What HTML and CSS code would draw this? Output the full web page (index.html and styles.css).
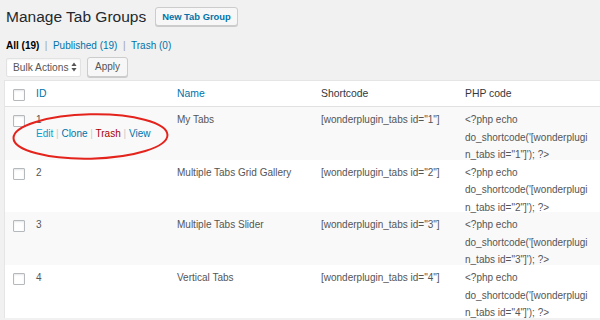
FILE: index.html
```html
<!DOCTYPE html>
<html lang="en">
<head>
    <meta charset="UTF-8">
    <meta name="viewport" content="width=device-width, initial-scale=1.0">
    <title>Manage Tab Groups</title>
    <link rel="stylesheet" href="styles.css">
</head>
<body>
    <div id="wrap">
        <div class="page-head">
            <h1>Manage Tab Groups</h1>
            <a class="btn btn-new" href="#">New Tab Group</a>
        </div>

        <div class="filters">
            <a class="current" href="#">All (19)</a>
            <span class="sep">|</span>
            <a href="#">Published (19)</a>
            <span class="sep">|</span>
            <a href="#">Trash (0)</a>
        </div>

        <div class="bulk">
            <div class="select">
                <span>Bulk Actions</span>
                <svg width="6" height="10" viewBox="0 0 6 10"><path d="M3 0.5L5.6 4H0.4z M3 9.5L0.4 6H5.6z" fill="#555"/></svg>
            </div>
            <button class="btn">Apply</button>
        </div>

        <div class="list">
            <div class="row head">
                <div class="cell cb"><span class="check"></span></div>
                <div class="cell"><a href="#">ID</a></div>
                <div class="cell"><a href="#">Name</a></div>
                <div class="cell">Shortcode</div>
                <div class="cell">PHP code</div>
            </div>

            <div class="row">
                <div class="cell cb"><span class="check"></span></div>
                <div class="cell">
                    1
                    <div class="actions">
                        <a class="edit" href="#">Edit</a> <span class="sep">|</span>
                        <a href="#">Clone</a> <span class="sep">|</span>
                        <a class="trash" href="#">Trash</a> <span class="sep">|</span>
                        <a href="#">View</a>
                    </div>
                </div>
                <div class="cell">My Tabs</div>
                <div class="cell">[wonderplugin_tabs id="1"]</div>
                <div class="cell"><div class="code">&lt;?php echo do_shortcode('[wonderplugin_tabs id="1"]'); ?&gt;</div></div>
            </div>

            <div class="row">
                <div class="cell cb"><span class="check"></span></div>
                <div class="cell">2</div>
                <div class="cell">Multiple Tabs Grid Gallery</div>
                <div class="cell">[wonderplugin_tabs id="2"]</div>
                <div class="cell"><div class="code">&lt;?php echo do_shortcode('[wonderplugin_tabs id="2"]'); ?&gt;</div></div>
            </div>

            <div class="row">
                <div class="cell cb"><span class="check"></span></div>
                <div class="cell">3</div>
                <div class="cell">Multiple Tabs Slider</div>
                <div class="cell">[wonderplugin_tabs id="3"]</div>
                <div class="cell"><div class="code">&lt;?php echo do_shortcode('[wonderplugin_tabs id="3"]'); ?&gt;</div></div>
            </div>

            <div class="row">
                <div class="cell cb"><span class="check"></span></div>
                <div class="cell">4</div>
                <div class="cell">Vertical Tabs</div>
                <div class="cell">[wonderplugin_tabs id="4"]</div>
                <div class="cell"><div class="code">&lt;?php echo do_shortcode('[wonderplugin_tabs id="4"]'); ?&gt;</div></div>
            </div>

            <!-- red marker round the row actions -->
            <svg class="marker" width="166" height="50" viewBox="0 0 166 50">
                <ellipse cx="78.5" cy="24.5" rx="77" ry="22.2" transform="rotate(-1.2 78.5 24.5)" fill="none" stroke="#e3231c" stroke-width="2"/>
            </svg>
        </div>
    </div>
</body>
</html>
```

FILE: styles.css
```css
html, body {
    margin: 0;
}
body {
    background: #f1f1f1;
    font-family: "Liberation Sans", Arial, sans-serif;
    font-size: 10px;
    color: #555;
    overflow: hidden;
}
a {
    color: #0073aa;
    text-decoration: none;
}

.page-head {
    display: flex;
    align-items: flex-start;
    gap: 9px;
    padding: 6px 6px 0;
}
h1 {
    margin: 0;
    font-size: 15.5px;
    font-weight: normal;
    line-height: 22px;
    color: #23282d;
}
.btn {
    display: inline-block;
    box-sizing: border-box;
    height: 20px;
    padding: 0 7px;
    border: 1px solid #ccc;
    border-radius: 3px;
    background: #f7f7f7;
    box-shadow: 0 1px 0 #ccc;
    font: inherit;
    line-height: 18px;
    color: #555;
}
.btn-new {
    height: 19px;
    margin-top: 1px;
    padding: 0 6px;
    font-size: 9.4px;
    font-weight: bold;
    line-height: 17px;
    color: #0073aa;
}

.filters {
    display: flex;
    gap: 5.5px;
    margin-top: 11px;
    padding: 0 6px;
    line-height: 14px;
}
.filters .current {
    color: #000;
    font-weight: bold;
}
.filters .sep {
    color: #a0a5aa;
}

.bulk {
    display: flex;
    gap: 6px;
    margin-top: 4px;
    padding: 0 6px;
}
.select {
    display: flex;
    align-items: center;
    justify-content: space-between;
    box-sizing: border-box;
    width: 75px;
    height: 19px;
    margin-top: 0.5px;
    padding: 0 3px 0 6px;
    border: 1px solid #e2e2e2;
    border-radius: 2px;
    background: #fff;
    box-shadow: inset 0 1px 2px rgba(0, 0, 0, 0.05);
    font-size: 10.2px;
}

.list {
    position: relative;
    width: 620px;
    margin: 3px 0 0 4px;
    border-top: 1px solid #e5e5e5;
    border-left: 1px solid #e5e5e5;
    background: #fff;
}
.row {
    display: grid;
    grid-template-columns: 23px 141px 144px 144px 1fr;
    height: 52.7px;
}
.row:nth-child(even) {
    background: #f9f9f9;
}
.row.head {
    height: 25px;
    border-bottom: 1px solid #e1e1e1;
    background: #fff;
}
.cell {
    padding: 4px 8px 0;
    line-height: 17.5px;
}
.head .cell {
    padding-top: 3.5px;
    font-size: 10.4px;
    color: #32373c;
}
.cell.cb,
.head .cell.cb {
    padding: 8px 0 0 8px;
}
.check {
    display: block;
    box-sizing: border-box;
    width: 12px;
    height: 12px;
    border: 1px solid #b4b9be;
    border-radius: 1px;
    background: #fff;
    box-shadow: inset 0 1px 2px rgba(0, 0, 0, 0.1);
}
.code {
    max-width: 125px;
    overflow-wrap: anywhere;
}

.actions {
    margin-top: -2px;
    line-height: 14px;
}
.actions .edit {
    color: #00a0d2;
}
.actions .trash {
    color: #a00;
}
.actions .sep {
    color: #ccc;
}

.marker {
    position: absolute;
    left: 7px;
    top: 31px;
}
```
